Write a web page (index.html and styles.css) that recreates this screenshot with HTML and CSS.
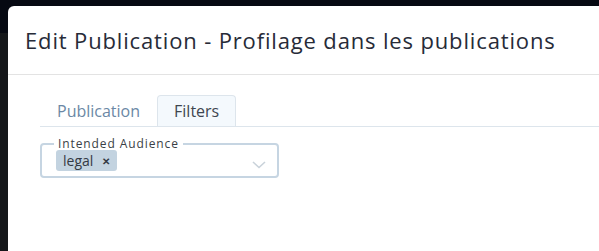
FILE: index.html
```html
<!DOCTYPE html>
<html lang="en">
<head>
    <meta charset="UTF-8">
    <title>Edit Publication</title>
    <link rel="stylesheet" href="styles.css">
</head>
<body>

<div class="backdrop">
    <div class="modal">
        <div class="modal-header">
            <h2>Edit Publication - Profilage dans les publications</h2>
        </div>
        <div class="modal-body">
            <div class="tabs">
                <a href="#publication" class="tab">Publication</a>
                <a href="#filters" class="tab active">Filters</a>
            </div>
            <fieldset class="select-box">
                <legend>Intended Audience</legend>
                <span class="chip">legal <span class="chip-close">&#x2715;</span></span>
                <svg class="chevron" width="14" height="8" viewBox="0 0 14 8">
                    <path d="M1 1 L7 6.5 L13 1" fill="none" stroke="#c9d2da" stroke-width="1.6"/>
                </svg>
            </fieldset>
        </div>
    </div>
</div>

</body>
</html>
```

FILE: styles.css
```css
body {
    margin: 0;
    padding: 0;
    font-family: "Open Sans", sans-serif;
    background-color: #15171a;
    overflow: hidden;
}
.backdrop {
    height: 251px;
    padding-top: 6px;
    box-sizing: border-box;
    overflow: hidden;
    background: linear-gradient(#060912 0, #060912 33px, #15171a 33px);
}
.modal {
    margin-left: 8px;
    height: 245px;
    background-color: #fff;
    border-top-left-radius: 6px;
}
.modal-header {
    height: 68px;
    padding: 0 17px;
    border-bottom: 1px solid #e3e3e3;
    display: flex;
    align-items: center;
}
.modal-header h2 {
    margin: 0;
    font-size: 22px;
    font-weight: 400;
    letter-spacing: 0.85px;
    color: #272b38;
    white-space: nowrap;
}
.modal-body {
    padding: 20px 0 0 32px;
}
.tabs {
    display: flex;
    border-bottom: 1px solid #dde5ec;
    height: 31px;
}
.tab {
    display: block;
    padding: 0 16px;
    line-height: 30px;
    font-size: 16px;
    color: #6b88a5;
    text-decoration: none;
    border: 1px solid transparent;
    border-bottom: none;
    border-radius: 4px 4px 0 0;
}
.tab.active {
    color: #3f4650;
    background-color: #f4f9fd;
    border-color: #dde5ec;
    height: 31px;
    box-sizing: border-box;
}
.select-box {
    position: relative;
    width: 239px;
    height: 39px;
    box-sizing: border-box;
    margin: 12px 0 0 0;
    padding: 0 14px;
    border: 2px solid #c6d5e2;
    border-radius: 4px;
}
.select-box legend {
    padding: 0 4px;
    margin-left: -2px;
    font-size: 12px;
    letter-spacing: 0.9px;
    color: #3a3f46;
    line-height: 10px;
}
.chip {
    display: inline-block;
    margin-top: 0;
    padding: 0 7px;
    height: 21px;
    line-height: 21px;
    font-size: 14px;
    color: #333a44;
    background-color: #c3d3e0;
    border-radius: 3px;
}
.chip-close {
    font-size: 10px;
    font-weight: 700;
    margin-left: 5px;
    vertical-align: 1px;
}
.chevron {
    position: absolute;
    right: 11px;
    top: 12px;
}
```
